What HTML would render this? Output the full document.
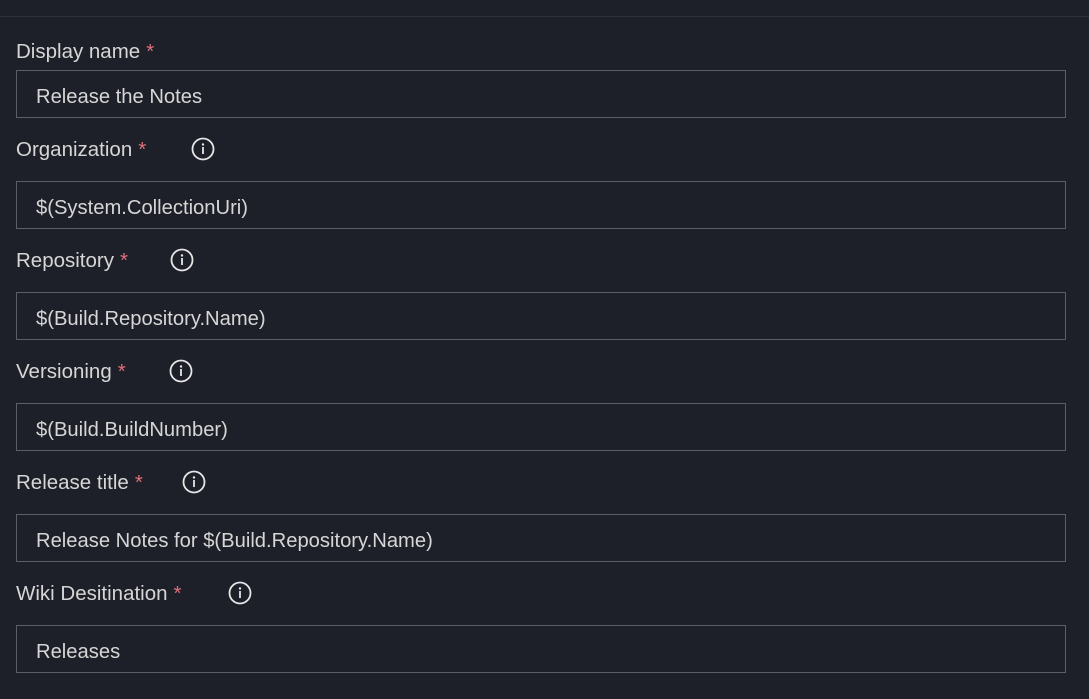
<!DOCTYPE html>
<html><head><meta charset="utf-8"><style>
html,body{margin:0;padding:0;}
body{width:1089px;height:699px;background:#1e2029;position:relative;overflow:hidden;font-family:"Liberation Sans",sans-serif;color:#d6d6d6;}
.top{position:absolute;left:0;top:16px;width:1089px;height:1px;background:#30323a;}
.lbl{position:absolute;left:16px;font-size:20.5px;line-height:24px;color:#d6d6d6;white-space:nowrap;}
.lbl b{color:#e0707a;font-weight:normal;margin-left:6px;}
.in{position:absolute;left:16px;width:1048px;height:46px;border:1px solid #5c5e65;font-size:20.2px;line-height:46px;box-sizing:content-box;}
.in span{position:absolute;left:19px;top:3px;color:#d6d6d6;}
svg{position:absolute;}
</style></head><body>
<div class="top"></div>

<div class="lbl" style="top:40px">Display name<b>*</b></div>
<div class="in" style="top:70px"><span>Release the Notes</span></div>

<div class="lbl" style="top:138px">Organization<b>*</b></div>
<svg style="left:191px;top:137px" width="24" height="24" viewBox="0 0 24 24"><circle cx="12" cy="12" r="10.5" fill="none" stroke="#e6e6e6" stroke-width="1.8"/><circle cx="12" cy="7.5" r="1.2" fill="#e6e6e6"/><rect x="11.1" y="10" width="1.8" height="7" fill="#e6e6e6"/></svg>
<div class="in" style="top:181px"><span>$(System.CollectionUri)</span></div>

<div class="lbl" style="top:249px">Repository<b>*</b></div>
<svg style="left:170px;top:248px" width="24" height="24" viewBox="0 0 24 24"><circle cx="12" cy="12" r="10.5" fill="none" stroke="#e6e6e6" stroke-width="1.8"/><circle cx="12" cy="7.5" r="1.2" fill="#e6e6e6"/><rect x="11.1" y="10" width="1.8" height="7" fill="#e6e6e6"/></svg>
<div class="in" style="top:292px"><span>$(Build.Repository.Name)</span></div>

<div class="lbl" style="top:360px">Versioning<b>*</b></div>
<svg style="left:169px;top:359px" width="24" height="24" viewBox="0 0 24 24"><circle cx="12" cy="12" r="10.5" fill="none" stroke="#e6e6e6" stroke-width="1.8"/><circle cx="12" cy="7.5" r="1.2" fill="#e6e6e6"/><rect x="11.1" y="10" width="1.8" height="7" fill="#e6e6e6"/></svg>
<div class="in" style="top:403px"><span>$(Build.BuildNumber)</span></div>

<div class="lbl" style="top:471px">Release title<b>*</b></div>
<svg style="left:182px;top:470px" width="24" height="24" viewBox="0 0 24 24"><circle cx="12" cy="12" r="10.5" fill="none" stroke="#e6e6e6" stroke-width="1.8"/><circle cx="12" cy="7.5" r="1.2" fill="#e6e6e6"/><rect x="11.1" y="10" width="1.8" height="7" fill="#e6e6e6"/></svg>
<div class="in" style="top:514px"><span>Release Notes for $(Build.Repository.Name)</span></div>

<div class="lbl" style="top:582px">Wiki Desitination<b>*</b></div>
<svg style="left:228px;top:581px" width="24" height="24" viewBox="0 0 24 24"><circle cx="12" cy="12" r="10.5" fill="none" stroke="#e6e6e6" stroke-width="1.8"/><circle cx="12" cy="7.5" r="1.2" fill="#e6e6e6"/><rect x="11.1" y="10" width="1.8" height="7" fill="#e6e6e6"/></svg>
<div class="in" style="top:625px"><span>Releases</span></div>
</body></html>
